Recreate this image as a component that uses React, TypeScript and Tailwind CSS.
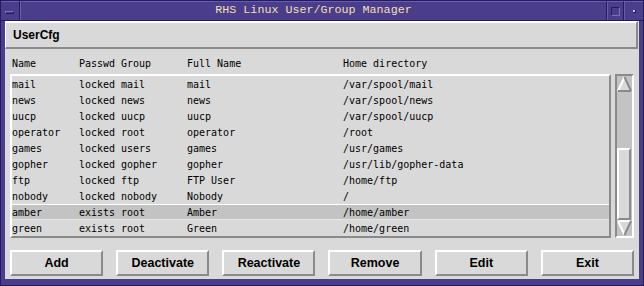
import React from "react";

const rows: [string, string, string, string, string][] = [
  ["mail", "locked", "mail", "mail", "/var/spool/mail"],
  ["news", "locked", "news", "news", "/var/spool/news"],
  ["uucp", "locked", "uucp", "uucp", "/var/spool/uucp"],
  ["operator", "locked", "root", "operator", "/root"],
  ["games", "locked", "users", "games", "/usr/games"],
  ["gopher", "locked", "gopher", "gopher", "/usr/lib/gopher-data"],
  ["ftp", "locked", "ftp", "FTP User", "/home/ftp"],
  ["nobody", "locked", "nobody", "Nobody", "/"],
  ["amber", "exists", "root", "Amber", "/home/amber"],
  ["green", "exists", "root", "Green", "/home/green"],
];

const mono = { fontFamily: '"DejaVu Sans Mono", "Liberation Mono", monospace' };
const sans = { fontFamily: '"Liberation Sans", Arial, sans-serif' };

function Cols({ c }: { c: string[] }) {
  return (
    <div className="flex whitespace-pre">
      <span className="w-[67px]">{c[0]}</span>
      <span className="w-[42px]">{c[1]}</span>
      <span className="w-[66px]">{c[2]}</span>
      <span className="w-[156px]">{c[3]}</span>
      <span className="flex-1">{c[4]}</span>
    </div>
  );
}

export default function App() {
  const buttons = ["Add", "Deactivate", "Reactivate", "Remove", "Edit", "Exit"];
  return (
    <div className="w-[644px] h-[286px] bg-[#4a3d8c] flex flex-col overflow-hidden border border-[#241b5a]">
      {/* Title bar */}
      <div className="h-[20px] flex shrink-0 border-b border-[#241b5a]">
        <div className="w-[19px] border-r border-[#241b5a] border-t border-t-[#6a5db0] flex items-center justify-center">
          <div className="w-[9px] h-[3px] bg-[#4a3d8c] border-t border-l border-[#7a6ec0] border-b border-r border-b-[#241b5a] border-r-[#241b5a] mt-[3px] -ml-[2px]" />
        </div>
        <div
          className="flex-1 flex items-center justify-center text-[#f5deb3] text-[11.7px] border-t border-l border-[#6a5db0] border-r border-r-[#241b5a]"
          style={{ fontFamily: '"Liberation Mono", monospace' }}
        >
          RHS Linux User/Group Manager
        </div>
        <div className="w-[17px] border-t border-l border-[#6a5db0] border-r border-r-[#241b5a] flex items-center justify-center">
          <div className="w-[9px] h-[9px] border border-[#241b5a] border-r-[#7a6ec0] border-b-[#7a6ec0]" />
        </div>
        <div className="w-[19px] border-t border-l border-[#6a5db0] flex items-center justify-center">
          <div className="w-[3px] h-[3px] bg-[#c8c0f0] border-b border-r border-[#241b5a]" />
        </div>
      </div>

      {/* Content */}
      <div className="flex-1 flex pl-[4px] pr-[4px] pb-[6px]">
        <div className="flex-1 bg-[#d9d9d9] flex flex-col">
          {/* header band */}
          <div
            className="h-[28px] shrink-0 mr-[1px] border-t-2 border-l border-white border-r-2 border-b-2 border-r-[#8a8a8a] border-b-[#8a8a8a] flex items-center pl-[7px] font-bold text-[12px] text-black"
            style={sans}
          >
            UserCfg
          </div>
          {/* column headers */}
          <div className="h-[25px] shrink-0 pl-[7px] pt-[8px] text-[10px] leading-[13px] text-black" style={mono}>
            <Cols c={["Name", "Passwd", "Group", "Full Name", "Home directory"]} />
          </div>
          {/* list + scrollbar */}
          <div className="h-[164px] shrink-0 flex px-[5px] gap-[4px]">
            <div className="flex-1 border-t-2 border-l-2 border-white border-r-2 border-b-2 border-r-[#8a8a8a] border-b-[#8a8a8a] text-[10px] text-black" style={mono}>
              {rows.map((r, i) => (
                <div
                  key={i}
                  className={
                    i === 8
                      ? "h-[16px] leading-[16px] overflow-hidden bg-[#c3c3c3] border-t border-white border-b border-b-[#e6e6e6]"
                      : "h-[16px] leading-[18px] overflow-hidden"
                  }
                >
                  <Cols c={r} />
                </div>
              ))}
            </div>
            <div className="w-[19px] border-t-2 border-l-2 border-[#8a8a8a] border-r-2 border-b-2 border-r-white border-b-white bg-[#c3c3c3] flex flex-col">
              <svg width="15" height="16" viewBox="0 0 15 16" className="shrink-0 block">
                <polygon points="7.5,1 1,15 14,15" fill="#d9d9d9" />
                <line x1="7.5" y1="1" x2="1" y2="15" stroke="#ffffff" strokeWidth="2" />
                <line x1="7.5" y1="1" x2="14" y2="15" stroke="#8a8a8a" strokeWidth="2" />
                <line x1="1" y1="15" x2="14" y2="15" stroke="#8a8a8a" strokeWidth="2" />
              </svg>
              <div className="h-[56px] shrink-0" />
              <div className="h-[72px] shrink-0 mr-[1px] bg-[#d9d9d9] border-t-2 border-l-2 border-white border-r-2 border-b-2 border-r-[#8a8a8a] border-b-[#8a8a8a]" />
              <svg width="15" height="16" viewBox="0 0 15 16" className="shrink-0 block">
                <polygon points="1,1 14,1 7.5,15" fill="#d9d9d9" />
                <line x1="1" y1="1" x2="14" y2="1" stroke="#ffffff" strokeWidth="2" />
                <line x1="1" y1="1" x2="7.5" y2="15" stroke="#ffffff" strokeWidth="2" />
                <line x1="14" y1="1" x2="7.5" y2="15" stroke="#8a8a8a" strokeWidth="2" />
              </svg>
            </div>
          </div>
          {/* buttons */}
          <div className="mt-[12px] h-[26px] shrink-0 px-[5px] grid grid-cols-6 gap-[13px]">
            {buttons.map((b) => (
              <div
                key={b}
                className="border-t-2 border-l-2 border-white border-r-2 border-b-2 border-r-[#8a8a8a] border-b-[#8a8a8a] flex items-center justify-center font-bold text-[12.5px] text-black"
                style={sans}
              >
                {b}
              </div>
            ))}
          </div>
        </div>
      </div>
    </div>
  );
}
